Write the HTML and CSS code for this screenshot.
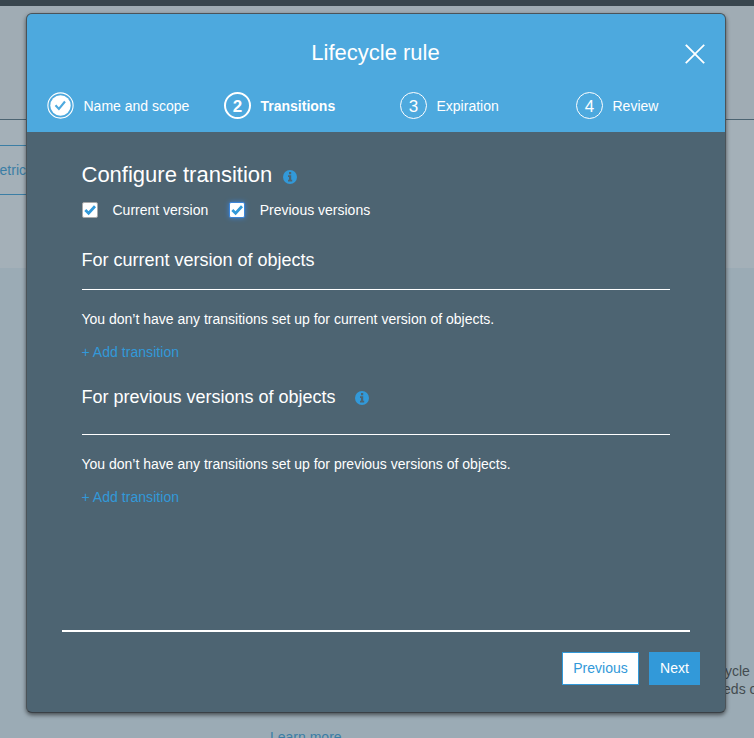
FILE: index.html
```
<!DOCTYPE html>
<html lang="en">
<head>
<meta charset="utf-8">
<title>Lifecycle rule</title>
<link rel="stylesheet" href="styles.css">
</head>
<body>
<div class="page">
  <div class="topbar"></div>
  <div class="page-head"></div>
  <div class="tabs"><div class="tab">Metrics</div></div>
  <div class="content">
    <p class="copy">lifecycle</p>
    <p class="copy second">needs of</p>
    <a class="learn">Learn more</a>
  </div>
</div>
<section class="dialog">
  <header class="header">
    <div class="title-row">
      <h1>Lifecycle rule</h1>
      <svg class="close" width="22" height="22" viewBox="0 0 22 22"><path d="M2.4 2.4L19.6 19.6M19.6 2.4L2.4 19.6" stroke="#fff" stroke-width="1.8" stroke-linecap="square" fill="none"/></svg>
    </div>
    <nav class="steps">
      <div class="step">
        <svg class="done" width="27" height="27" viewBox="0 0 27 27"><circle cx="13.5" cy="13.5" r="12.6" fill="none" stroke="#fff" stroke-width="1.1"/><circle cx="13.5" cy="13.5" r="10.2" fill="#fff"/><path d="M8.5 13.2L11.9 17L18 9.5" fill="none" stroke="#4da9de" stroke-width="2.1"/></svg>
        <span>Name and scope</span>
      </div>
      <div class="step active"><b class="num">2</b><span>Transitions</span></div>
      <div class="step"><b class="num">3</b><span>Expiration</span></div>
      <div class="step"><b class="num">4</b><span>Review</span></div>
    </nav>
  </header>
  <main class="body">
    <h2>Configure transition
      <svg class="info" width="14" height="14" viewBox="0 0 14 14"><circle cx="7" cy="7" r="7" fill="#3299d9"/><path d="M6 2H8.2V4.2H6ZM5 5.2H8.2V9.8H9.2V11.6H5V9.8H6V7H5Z" fill="#4d6472"/></svg>
    </h2>
    <div class="checks">
      <span class="box"><svg width="12" height="12" viewBox="0 0 12 12"><path d="M1.3 6L4.6 9.2L11 2.3" fill="none" stroke="#3299d9" stroke-width="2.8"/></svg></span>
      <span class="label">Current version</span>
      <span class="box focus"><svg width="12" height="12" viewBox="0 0 12 12"><path d="M1.3 6L4.6 9.2L11 2.3" fill="none" stroke="#3299d9" stroke-width="2.8"/></svg></span>
      <span class="label">Previous versions</span>
    </div>
    <h3 class="current"><span>For current version of objects</span></h3>
    <p>You don’t have any transitions set up for current version of objects.</p>
    <a class="add">+ Add transition</a>
    <h3 class="previous"><span>For previous versions of objects</span>
      <svg class="info" width="14" height="14" viewBox="0 0 14 14"><circle cx="7" cy="7" r="7" fill="#3299d9"/><path d="M6 2H8.2V4.2H6ZM5 5.2H8.2V9.8H9.2V11.6H5V9.8H6V7H5Z" fill="#4d6472"/></svg>
    </h3>
    <p>You don’t have any transitions set up for previous versions of objects.</p>
    <a class="add">+ Add transition</a>
  </main>
  <footer class="footer">
    <button class="btn ghost">Previous</button>
    <button class="btn">Next</button>
  </footer>
</section>
</body>
</html>
```
FILE: styles.css
```
* { box-sizing: border-box; }
body { margin: 0; font: 14px/20px "Liberation Sans", Arial, sans-serif; color: #fff; }
h1, h2, h3, p { margin: 0; font-weight: 400; }
svg { display: block; flex: none; }
.page { height: 738px; overflow: hidden; display: flex; flex-direction: column; background: #9babb5; }
.topbar { height: 6px; background: #39464e; flex: none; }
.page-head { height: 114px; background: #a0acb4; border-bottom: 1px solid #4c6472; flex: none; }
.tabs { height: 148px; padding-top: 25px; background: #a4b0b8; flex: none; }
.tab { width: 60px; height: 50px; padding-right: 27px; line-height: 48px; color: #3b7ea5; border: solid #3b7ea5; border-width: 1px 0; display: flex; justify-content: flex-end; }
.content { padding-top: 394px; }
.copy { margin-left: 700px; width: 90px; color: #434b50; line-height: 18px; }
.second { padding-left: 7.5px; }
.learn { display: block; margin: 30px 0 0 270px; color: #3b7ea5; line-height: 18px; }
.dialog { position: absolute; left: 26px; top: 13px; width: 700px; height: 700px; display: flex; flex-direction: column; background: #4d6472; border: 1px solid #4b5358; border-bottom-color: #3a4046; border-radius: 6px; box-shadow: 0 2px 4px rgba(0,0,0,.55); overflow: hidden; }
.header { height: 118px; background: #4da9de; flex: none; }
.title-row { height: 78px; padding: 24px 10px 0 9px; display: grid; grid-template-columns: 30px 1fr 30px; }
.title-row h1 { grid-column: 2; text-align: center; font-size: 22px; line-height: 30px; }
.close { margin-top: 5px; margin-left: -1px; }
.steps { display: grid; grid-template-columns: 177px 176px 176px 1fr; padding-left: 20px; }
.step { display: flex; align-items: center; gap: 9.5px; height: 27px; }
.step span { line-height: 20px; padding-top: 1px; }
.num { width: 27px; height: 27px; border: 1px solid #fff; border-radius: 50%; font-size: 17px; font-weight: 400; line-height: 27px; text-align: center; }
.active, .active .num { font-weight: 700; }
.active .num { border-width: 2px; line-height: 25px; }
.body { flex: 1; padding: 28px 55px 0; }
h2 { display: flex; align-items: center; gap: 11px; font-size: 22px; line-height: 30px; height: 30px; margin-left: -.5px; }
h2 .info { margin-top: 4px; }
.body p, .add, h3 span { margin-left: -.5px; }
.checks { display: flex; align-items: center; height: 20px; margin-top: 10px; }
.box { width: 16px; height: 16px; padding: 1px; background: #fff; border: 1px solid #a9a9a9; border-radius: 2px; }
.box.focus { border-color: #3b84d8; box-shadow: 0 0 5px #3b84d8; }
.label { margin-left: 14.5px; }
.label + .box { margin-left: 20.5px; }
.focus + .label { margin-left: 15px; }
h3 { display: flex; align-items: center; font-size: 18px; line-height: 24px; border-bottom: 1px solid #fff; margin-bottom: 19px; }
.current { margin-top: 28px; height: 42px; padding-bottom: 17px; }
.previous { margin-top: 23px; height: 50px; padding-bottom: 25px; gap: 19.5px; }
.previous .info { margin-top: 2px; }
.add { display: block; margin-top: 13px; color: #3299d9; letter-spacing: .04px; }
.footer { height: 82px; margin: 0 35px; padding: 20px 0 0; border-top: 2px solid #fff; display: flex; justify-content: flex-end; gap: 10px; flex: none; }
.footer .btn:last-child { margin-right: -10px; }
.btn { height: 33px; width: 51px; padding: 0 0 2px; background: #3299d9; color: #fff; border: 1px solid #3299d9; font: inherit; }
.ghost { width: 77px; background: #fff; color: #3299d9; }
```
